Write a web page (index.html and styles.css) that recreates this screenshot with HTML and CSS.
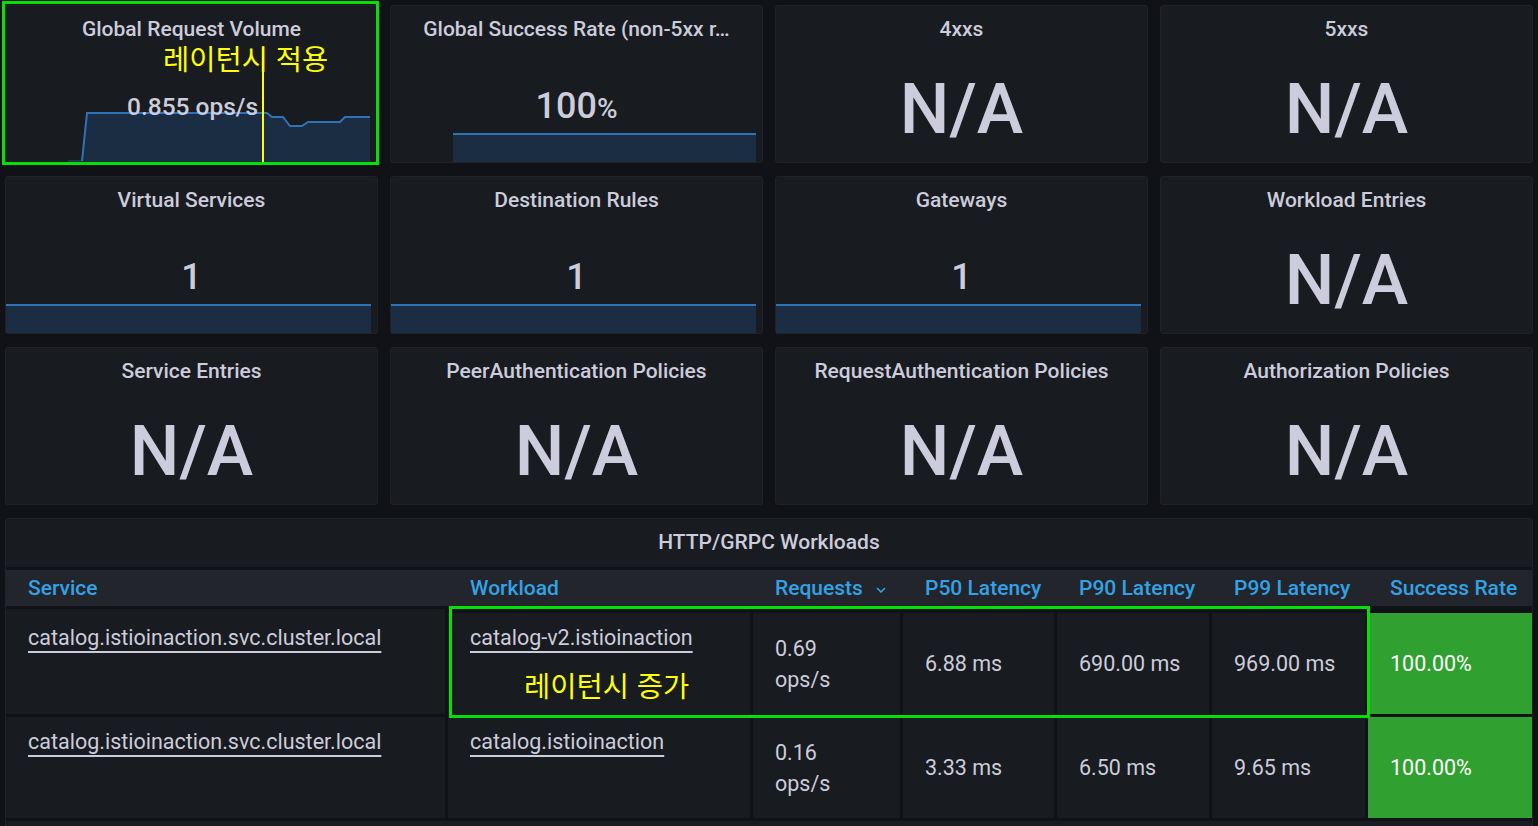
FILE: index.html
```html
<!DOCTYPE html>
<html lang="ko">
<head>
<meta charset="utf-8">
<title>Istio Mesh Dashboard</title>
<link rel="stylesheet" href="styles.css">
</head>
<body>
<main class="dashboard">
  <div class="stat-grid">
    <section class="panel stat">
      <header class="ptitle">Global Request Volume</header>
      <div class="pvalue v-rate">0.855 ops/s</div>
      <svg class="spark" viewBox="0 0 371 60" width="371" height="60">
        <polygon class="spark-fill" points="76,59 81,11 261,11 266,15 277,15 284,24 296,24 302,20 334,20 339,15 364,15 364,60 76,60"/>
        <polyline class="spark-line faint" points="62,59 76,59"/>
        <polyline class="spark-line" points="76,59 81,11 261,11 266,15 277,15 284,24 296,24 302,20 334,20 339,15 364,15"/>
      </svg>
      <div class="anno-line"></div>
      <div class="anno-text anno-top">레이턴시 적용</div>
      <div class="hl-box hl-stat"></div>
    </section>
    <section class="panel stat">
      <header class="ptitle">Global Success Rate (non-5xx r…</header>
      <div class="pvalue v-num">100<span class="unit">%</span></div>
      <svg class="spark" viewBox="0 0 371 60" width="371" height="60">
        <rect class="spark-fill" x="62" y="31" width="303" height="29"/>
        <line class="spark-line" x1="62" y1="32" x2="365" y2="32"/>
      </svg>
    </section>
    <section class="panel stat">
      <header class="ptitle">4xxs</header>
      <div class="pvalue v-na">N/A</div>
    </section>
    <section class="panel stat">
      <header class="ptitle">5xxs</header>
      <div class="pvalue v-na">N/A</div>
    </section>

    <section class="panel stat">
      <header class="ptitle">Virtual Services</header>
      <div class="pvalue v-num">1</div>
      <svg class="spark" viewBox="0 0 371 60" width="371" height="60">
        <rect class="spark-fill" x="0" y="31" width="365" height="29"/>
        <line class="spark-line" x1="0" y1="32" x2="365" y2="32"/>
      </svg>
    </section>
    <section class="panel stat">
      <header class="ptitle">Destination Rules</header>
      <div class="pvalue v-num">1</div>
      <svg class="spark" viewBox="0 0 371 60" width="371" height="60">
        <rect class="spark-fill" x="0" y="31" width="365" height="29"/>
        <line class="spark-line" x1="0" y1="32" x2="365" y2="32"/>
      </svg>
    </section>
    <section class="panel stat">
      <header class="ptitle">Gateways</header>
      <div class="pvalue v-num">1</div>
      <svg class="spark" viewBox="0 0 371 60" width="371" height="60">
        <rect class="spark-fill" x="0" y="31" width="365" height="29"/>
        <line class="spark-line" x1="0" y1="32" x2="365" y2="32"/>
      </svg>
    </section>
    <section class="panel stat">
      <header class="ptitle">Workload Entries</header>
      <div class="pvalue v-na">N/A</div>
    </section>

    <section class="panel stat">
      <header class="ptitle">Service Entries</header>
      <div class="pvalue v-na">N/A</div>
    </section>
    <section class="panel stat">
      <header class="ptitle">PeerAuthentication Policies</header>
      <div class="pvalue v-na">N/A</div>
    </section>
    <section class="panel stat">
      <header class="ptitle">RequestAuthentication Policies</header>
      <div class="pvalue v-na">N/A</div>
    </section>
    <section class="panel stat">
      <header class="ptitle">Authorization Policies</header>
      <div class="pvalue v-na">N/A</div>
    </section>
  </div>

  <section class="panel table-panel">
    <header class="ptitle table-title">HTTP/GRPC Workloads</header>
    <div class="tbl">
      <div class="trow thead">
        <div class="th">Service</div>
        <div class="th">Workload</div>
        <div class="th">Requests
          <svg class="chev" viewBox="0 0 10 6" width="10" height="6"><polyline points="1,1 5,5 9,1"/></svg>
        </div>
        <div class="th">P50 Latency</div>
        <div class="th">P90 Latency</div>
        <div class="th">P99 Latency</div>
        <div class="th">Success Rate</div>
      </div>
      <div class="trow tr first">
        <div class="td link svc"><a>catalog.istioinaction.svc.cluster.local</a></div>
        <div class="td link"><a>catalog-v2.istioinaction</a></div>
        <div class="td num">0.69<br>ops/s</div>
        <div class="td num">6.88 ms</div>
        <div class="td num">690.00 ms</div>
        <div class="td num">969.00 ms</div>
        <div class="td num ok">100.00%</div>
      </div>
      <div class="trow tr">
        <div class="td link svc"><a>catalog.istioinaction.svc.cluster.local</a></div>
        <div class="td link"><a>catalog.istioinaction</a></div>
        <div class="td num">0.16<br>ops/s</div>
        <div class="td num">3.33 ms</div>
        <div class="td num">6.50 ms</div>
        <div class="td num">9.65 ms</div>
        <div class="td num ok">100.00%</div>
      </div>
    </div>
    <div class="hl-box hl-row"></div>
    <div class="anno-text anno-row">레이턴시 증가</div>
  </section>
</main>
</body>
</html>
```

FILE: styles.css
```css
* { box-sizing: border-box; }

html, body {
  margin: 0;
  padding: 0;
  height: 100%;
  overflow: hidden;
  background: #111217;
}

body {
  font-family: Roboto, "Noto Sans", "Noto Sans CJK KR", sans-serif;
  color: #ccccdc;
}

.dashboard {
  display: flex;
  flex-direction: column;
  gap: 13px;
  padding: 5px 5px 0 5px;
}

.stat-grid {
  display: grid;
  grid-template-columns: repeat(4, 1fr);
  grid-auto-rows: 158px;
  column-gap: 12px;
  row-gap: 13px;
}

.panel {
  position: relative;
  background: #181b1f;
  border: 1px solid #202226;
  border-radius: 3px;
}

.stat {
  display: flex;
  flex-direction: column;
}

.ptitle {
  height: 46px;
  display: flex;
  align-items: center;
  justify-content: center;
  padding-bottom: 1px;
  font-size: 21px;
  font-weight: 500;
  white-space: nowrap;
  color: #ccccdc;
  position: relative;
  z-index: 2;
}

.pvalue {
  flex: 1;
  display: flex;
  align-items: center;
  justify-content: center;
  font-weight: 500;
  position: relative;
  z-index: 2;
  padding-bottom: 2px;
}

.v-rate { font-size: 24.5px; padding-left: 2px; padding-bottom: 1px; }
.v-num { font-size: 36px; }
.v-num .unit { font-size: 28px; margin-top: 4px; }
.v-na { font-size: 70px; padding-bottom: 0; padding-top: 3px; }

.spark {
  position: absolute;
  left: 0;
  bottom: 0;
  z-index: 1;
}

.spark-fill { fill: #1b2d43; }
.spark-line { fill: none; stroke: #2f72b8; stroke-width: 2; }
.spark-line.faint { stroke: #1c3550; }

/* annotations drawn over the dashboard */
.anno-line {
  position: absolute;
  left: 256px;
  top: 43px;
  bottom: 0;
  width: 2px;
  background: #ffff00;
  z-index: 3;
}

.anno-text {
  position: absolute;
  font-family: "Noto Sans CJK KR", sans-serif;
  font-size: 28.5px;
  line-height: 28px;
  color: #ffff00;
  white-space: nowrap;
  z-index: 4;
}

.anno-top { left: 157px; top: 38px; }
.anno-row { left: 518px; top: 152px; }

.hl-box {
  position: absolute;
  border: 3px solid #05e005;
  z-index: 5;
  pointer-events: none;
}

.hl-stat { left: -4px; top: -5px; width: 377px; height: 164px; }
.hl-row { left: 443px; top: 87px; width: 921px; height: 112px; }

/* table panel */
.table-panel {
  height: 320px;
}

.table-title {
  height: 48px;
  padding-bottom: 2px;
}

.tbl {
  background: #111217;
  padding: 3px 0;
  display: flex;
  flex-direction: column;
  gap: 3px;
}

.trow {
  display: grid;
  grid-template-columns: 439px 302px 147px 151px 152px 153px 1fr;
  column-gap: 3px;
}

.thead {
  background: #22252b;
  height: 36px;
}

.th {
  display: flex;
  align-items: center;
  padding-left: 22px;
  font-size: 21px;
  font-weight: 500;
  color: #33a2e5;
  white-space: nowrap;
}

.chev {
  margin-left: 13px;
  margin-top: 4px;
  fill: none;
  stroke: #33a2e5;
  stroke-width: 1.6;
}

.tr { height: 101px; }
.tr.first { height: 105px; }
.tr.first .td:not(.svc) { margin-top: 4px; }

.td {
  background: #181b1f;
  padding-left: 22px;
  font-size: 21.5px;
  line-height: 31px;
  color: #ccccdc;
  white-space: nowrap;
}

.td.link { padding-top: 9px; }
.tr.first .td.svc { padding-top: 13px; }

.td a {
  color: #ccccdc;
  text-decoration: underline;
  text-decoration-thickness: 2px;
  text-underline-offset: 6px;
}

.td.num {
  display: flex;
  align-items: center;
}

.td.ok {
  background: #30a130;
  color: #ffffff;
}
```
